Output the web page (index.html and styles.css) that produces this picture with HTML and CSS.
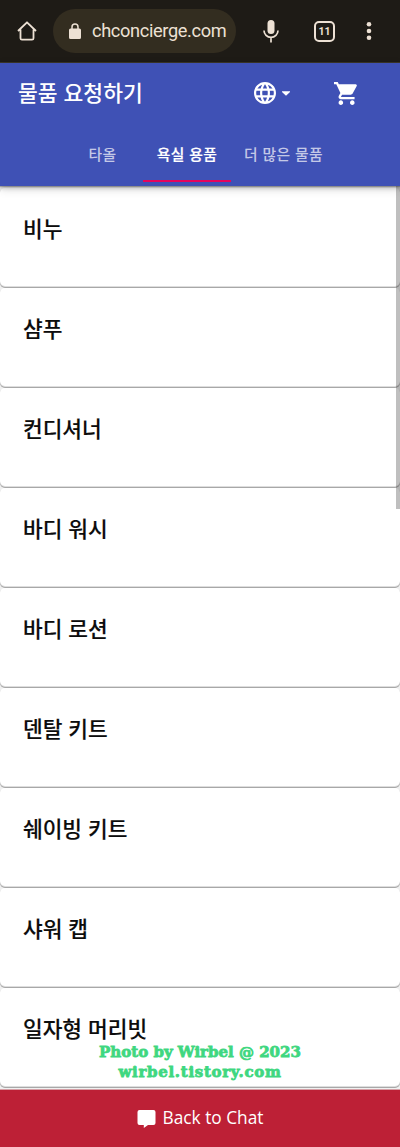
FILE: index.html
```html
<!DOCTYPE html>
<html lang="ko">
<head>
  <meta charset="UTF-8">
  <meta name="viewport" content="width=device-width, initial-scale=1.0">
  <title>물품 요청하기</title>
  <link rel="stylesheet" href="styles.css">
</head>
<body>
  <div class="browser-bar">
    <svg class="home" viewBox="0 0 20 20"><path d="M1 10 L10 1.3 L19 10 M3.5 8.5 V17.2 Q3.5 18.7 5 18.7 H15 Q16.500 18.700 16.500 17.200 V8.500"/></svg>
    <div class="url">
      <svg class="lock" viewBox="0 0 16 21"><path d="M14 7h-1V5A5 5 0 0 0 3 5v2H2a2 2 0 0 0-2 2v10a2 2 0 0 0 2 2h12a2 2 0 0 0 2-2V9a2 2 0 0 0-2-2zM5 7V5a3 3 0 0 1 6 0v2z"/></svg>
      <div class="url-text">chconcierge.com</div>
    </div>
    <svg class="mic" viewBox="0 0 16 23"><rect x="4.500" y="0" width="7" height="14" rx="3.500"/><path d="M1 10.500a7 6.800 0 0 0 14 0M8 17.500V22.500"/></svg>
    <div class="tab-count">11</div>
    <svg class="dots" viewBox="0 0 6 18"><circle cx="3" cy="2.300" r="2.300"/><circle cx="3" cy="9" r="2.300"/><circle cx="3" cy="15.700" r="2.300"/></svg>
  </div>

  <header>
    <div class="toolbar">
      <h1>물품 요청하기</h1>
      <button class="lang">
        <svg class="globe" viewBox="2 2 20 20"><path d="M11.990 2C6.470 2 2 6.480 2 12s4.470 10 9.990 10C17.520 22 22 17.520 22 12S17.520 2 11.990 2zm6.930 6h-2.950c-.32-1.250-.78-2.450-1.380-3.560 1.840.63 3.370 1.910 4.330 3.560zM12 4.040c.83 1.200 1.480 2.530 1.910 3.960h-3.820c.43-1.430 1.080-2.760 1.910-3.960zM4.260 14C4.100 13.360 4 12.690 4 12s.1-1.360.26-2h3.380c-.08.66-.14 1.320-.14 2s.06 1.340.14 2H4.260zm.82 2h2.950c.32 1.250.78 2.450 1.380 3.560-1.840-.63-3.370-1.900-4.330-3.560zm2.950-8H5.080c.96-1.660 2.490-2.930 4.330-3.560C8.810 5.550 8.350 6.750 8.030 8zM12 19.960c-.83-1.200-1.480-2.530-1.910-3.960h3.820c-.43 1.430-1.080 2.760-1.910 3.960zM14.340 14H9.660c-.09-.66-.16-1.320-.16-2s.07-1.350.16-2h4.680c.09.65.16 1.320.16 2s-.07 1.340-.16 2zm.25 5.560c.6-1.110 1.060-2.310 1.380-3.560h2.950c-.96 1.650-2.490 2.930-4.330 3.560zM16.360 14c.08-.66.14-1.320.14-2s-.06-1.340-.14-2h3.380c.16.64.26 1.310.26 2s-.1 1.360-.26 2h-3.380z"/></svg>
        <svg class="arrow" viewBox="0 0 8 5"><path d="M0 .3h8v.7L4 4.800 0 1z"/></svg>
      </button>
      <button class="cart">
        <svg viewBox="1 2 21 20"><path d="M7 18c-1.100 0-1.990.9-1.990 2S5.900 22 7 22s2-.9 2-2-.9-2-2-2zM1 2v2h2l3.600 7.590-1.350 2.450c-.16.28-.25.61-.25.96 0 1.100.9 2 2 2h12v-2H7.420c-.14 0-.25-.11-.25-.25l.03-.12.900-1.630h7.450c.75 0 1.410-.41 1.750-1.030l3.580-6.490A1.003 1.003 0 0 0 20 4H5.210l-.94-2H1zm16 16c-1.100 0-1.990.9-1.990 2s.89 2 1.990 2 2-.9 2-2-.9-2-2-2z"/></svg>
      </button>
    </div>
    <nav>
      <a class="first">타올</a>
      <a class="active">욕실 용품</a>
      <a>더 많은 물품</a>
    </nav>
  </header>

  <main>
    <div class="item">비누</div>
    <div class="item">샴푸</div>
    <div class="item">컨디셔너</div>
    <div class="item">바디 워시</div>
    <div class="item">바디 로션</div>
    <div class="item">덴탈 키트</div>
    <div class="item">쉐이빙 키트</div>
    <div class="item">샤워 캡</div>
    <div class="item">일자형 머리빗</div>
    <div class="scrollbar"></div>
    <div class="watermark">
      <div class="line1">Photo by Wirbel @ 2023</div>
      <div class="line2">wirbel.tistory.com</div>
    </div>
  </main>

  <footer>
    <svg viewBox="0 0 18 18"><path d="M2 0h14a2 2 0 0 1 2 2v11a2 2 0 0 1-2 2h-5.500L6.300 18v-3H2a2 2 0 0 1-2-2V2a2 2 0 0 1 2-2z"/></svg>
    <span>Back to Chat</span>
  </footer>
</body>
</html>
```
FILE: styles.css
```css
* { box-sizing: border-box; }
body {
  margin: 0;
  height: 1147px;
  display: flex;
  flex-direction: column;
  overflow: hidden;
  background: #fff;
  color: #0c0c0c;
  font-family: 'Noto Sans CJK KR', sans-serif;
}
svg { display: block; flex: none; }
button { background: none; border: none; padding: 0; color: white; }

.browser-bar {
  flex: none;
  height: 63px;
  display: flex;
  align-items: center;
  padding-left: 17px;
  background: #1e1b16;
  border-bottom: 1px solid #3b3629;
}
.home { width: 20px; height: 20px; fill: none; stroke: #ede1d4; stroke-width: 1.8; stroke-linejoin: round; }
.url {
  width: 183px;
  height: 44px;
  margin-left: 16px;
  padding-left: 16px;
  display: flex;
  align-items: center;
  background: #332d20;
  border-radius: 22px;
}
.lock { width: 12px; height: 16px; fill: #ede1d4; }
.url-text {
  width: 135px;
  margin-left: 11px;
  color: #ede1d4;
  font: 18.2px/26px Roboto, sans-serif;
  letter-spacing: -0.35px;
  white-space: nowrap;
}
.mic { width: 16px; height: 23px; margin-left: 27px; fill: #ede1d4; }
.mic path { fill: none; stroke: #ede1d4; stroke-width: 1.7; }
.tab-count {
  width: 21px;
  height: 21px;
  margin-left: 35px;
  border: 2px solid #ede1d4;
  border-radius: 5px;
  color: #ede1d4;
  font: 700 10.5px/17px Roboto, sans-serif;
  text-align: center;
}
.dots { width: 6px; height: 18px; margin-left: 31px; fill: #ede1d4; }

header {
  flex: none;
  height: 123px;
  background: #3f51b5;
  color: white;
  box-shadow: 0 1px 1px rgba(0,0,0,0.22), 0 2px 4px rgba(0,0,0,0.18), 0 3px 9px rgba(0,0,0,0.16);
  position: relative;
  z-index: 10;
}
.toolbar { height: 60px; display: flex; align-items: center; padding-left: 18px; }
h1 {
  width: 236px;
  margin: 0;
  font-size: 21.5px;
  font-weight: 500;
  line-height: 30px;
  padding-bottom: 2px;
}
.lang { display: flex; align-items: center; gap: 6px; }
.globe { width: 22px; height: 22px; fill: white; }
.arrow { width: 8px; height: 5px; fill: white; }
.cart { margin-left: 44px; }
.cart svg { width: 24px; height: 23px; fill: white; }
nav { height: 59px; display: flex; padding-left: 62px; }
nav a {
  height: 59px;
  width: 105px;
  font-size: 14.8px;
  font-weight: 500;
  line-height: 61px;
  letter-spacing: 0.4px;
  text-align: center;
  color: rgba(255,255,255,0.7);
}
nav .first { width: 81px; }
nav .active { width: 88px; color: white; border-bottom: 2px solid #e5045c; -webkit-text-stroke: 0.2px; }

main { flex: 1; position: relative; overflow: hidden; padding-top: 2px; background: #f0f0f0; }
.item {
  height: 100px;
  padding: 25px 23px;
  background: white;
  border-radius: 5px;
  box-shadow: inset 0 -1px 0 #a8a8a8, inset 0 -2px 0 #dedede;
  font-size: 21.4px;
  font-weight: 500;
  line-height: 30px;
  -webkit-text-stroke: 0.15px #0c0c0c;
}
.scrollbar { position: absolute; top: 0; right: 0; width: 4px; height: 323px; background: rgba(0,0,0,0.25); }
.watermark {
  position: absolute;
  left: 0;
  right: 0;
  top: 856px;
  text-align: center;
  color: #3fd780;
  font: 900 15px/20px 'DejaVu Serif', serif;
  -webkit-text-stroke: 0.8px #3fd780;
  white-space: nowrap;
}
.watermark .line2 { letter-spacing: 0.7px; }

footer {
  flex: none;
  height: 58px;
  display: flex;
  align-items: center;
  justify-content: center;
  gap: 7px;
  background: #bd2036;
  border-top: 1px solid #d6a0a6;
  color: white;
  font: 17.3px/24px 'Open Sans', sans-serif;
}
footer svg { width: 19px; height: 18px; fill: white; }
footer span { padding-bottom: 1px; }
```
